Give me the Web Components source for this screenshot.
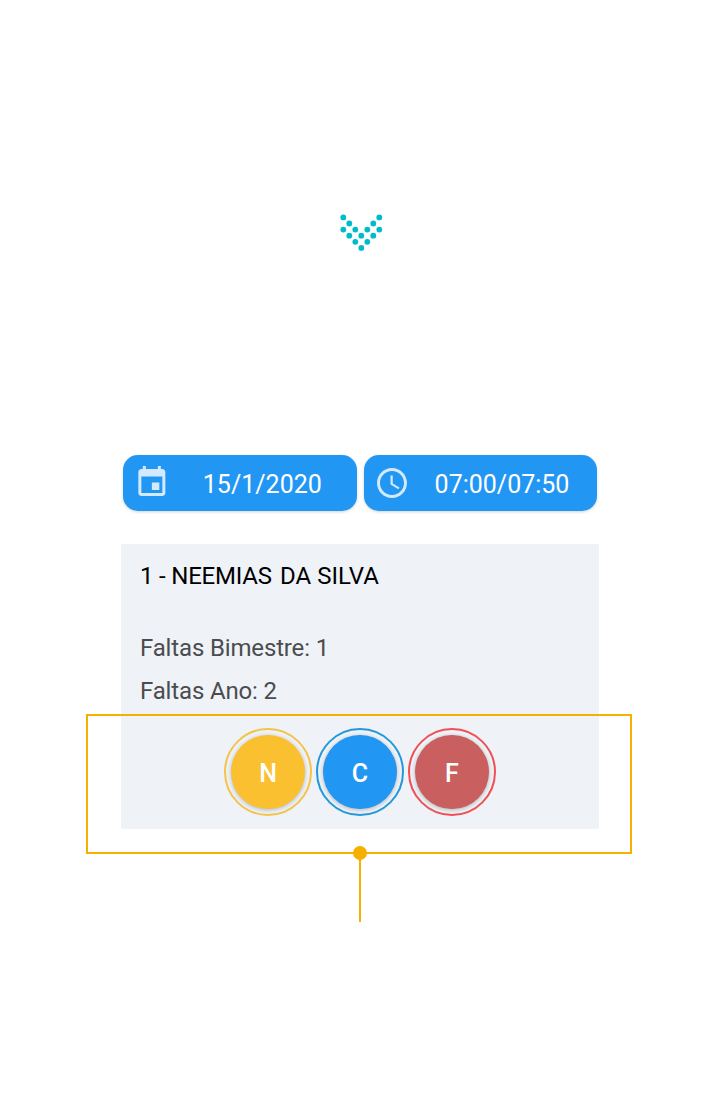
<!DOCTYPE html>
<html lang="pt-BR">
<head>
<meta charset="utf-8">
<title>Chamada</title>
<style>
html, body { margin: 0; background: #fff; }
body { font-family: Roboto, "Liberation Sans", sans-serif; }
</style>
</head>
<body>
<attendance-page></attendance-page>
<script>
const define = (name, html) => {
  const template = document.createElement('template');
  template.innerHTML = html;
  customElements.define(name, class extends HTMLElement {
    constructor() {
      super();
      this.attachShadow({ mode: 'open' }).append(template.content.cloneNode(true));
    }
  });
};

/* Chevron made of dots, on a 6px grid */
const dots = [[0,0],[6,0],[1,1],[5,1],[0,2],[2,2],[4,2],[6,2],[1,3],[3,3],[5,3],[2,4],[4,4],[3,5]]
  .map(([x, y]) => `<circle cx="${3.3 + x * 6}" cy="${3.4 + y * 6.1}" r="2.9"/>`).join('');
define('dotted-chevron', `
<style>:host { display: block; width: 43px; height: 38px; } svg { display: block; fill: #00bccb; }</style>
<svg width="43" height="38" viewBox="0 0 43 38">${dots}</svg>`);

define('event-icon', `
<style>:host { display: block; } svg { display: block; fill: #d3e9fd; }</style>
<svg width="36" height="36" viewBox="0 0 24 24"><path transform="translate(-.1 -.3)" d="M17 12h-5v5h5v-5zM16 1v2H8V1H6v2H5c-1.11 0-1.99.9-1.99 2L3 19c0 1.1.89 2 2 2h14c1.1 0 2-.9 2-2V5c0-1.1-.9-2-2-2h-1V1h-2zm3 18H5V8h14v11z"/></svg>`);

define('clock-icon', `
<style>:host { display: block; } svg { display: block; fill: #d3e9fd; }</style>
<svg width="36" height="36" viewBox="0 0 24 24"><path d="M11.99 2C6.47 2 2 6.48 2 12s4.47 10 9.99 10C17.52 22 22 17.52 22 12S17.52 2 11.99 2zM12 20c-4.42 0-8-3.58-8-8s3.58-8 8-8 8 3.58 8 8-3.58 8-8 8zm.5-13H11v6l5.25 3.15.75-1.23-4.5-2.67z"/></svg>`);

define('pill-button', `
<style>
:host { display: flex; box-sizing: border-box; width: 233.3px; height: 56px; border-radius: 15px; background: #2296f3;
  box-shadow: 0 1px 3px rgba(0,0,0,.18); color: #fff; font-size: 25px; line-height: 60px; padding-left: 10.5px; }
.icon { flex: none; width: 36px; padding-top: var(--icon-top, 9.5px); }
.label { margin-left: var(--label-gap, 33px); white-space: nowrap; }
</style>
<div class="icon"><slot name="icon"></slot></div><div class="label"><slot></slot></div>`);

define('round-action', `
<style>
:host { display: flex; box-sizing: border-box; width: 88px; height: 88px; border: 2px solid var(--ring); border-radius: 50%;
  padding: 5.3px 5px 5px; }
.disc { width: 74.5px; height: 74.5px; border-radius: 50%; background: var(--fill); color: #fff; font-size: 25px; font-weight: 500;
  line-height: 78px; text-align: center; box-shadow: 0 1px 4px rgba(0,0,0,.26); }
</style>
<div class="disc"><slot></slot></div>`);

define('student-card', `
<style>
:host { display: flex; flex-direction: column; box-sizing: border-box; width: 478px; height: 285px; background: #eff3f8;
  padding: 18px 0 0 19px; font-size: 24px; line-height: 28px; color: #4c4c4e; white-space: nowrap; }
.name { color: #000; letter-spacing: -.2px; }
.absences { display: grid; gap: 15.5px; margin-top: 44px; letter-spacing: -.15px; }
.actions { display: flex; gap: 4px; margin: 22.5px 0 0 84px; letter-spacing: 0; }
</style>
<div class="name"><slot name="name"></slot></div>
<div class="absences"><slot></slot></div>
<div class="actions"><slot name="action"></slot></div>`);

/* Callout frame that lies over the lower part of the card */
define('callout-frame', `
<style>
:host { display: block; position: absolute; left: 86px; top: 714px; width: 546px; height: 208px; }
.box { box-sizing: border-box; height: 140px; border: 2px solid #f6b000; }
.stem { width: 2px; height: 68px; margin-left: 273px; background: #f6b000; }
.knob { position: absolute; left: 267px; top: 132px; width: 14px; height: 14px; border-radius: 50%; background: #f6b000; }
</style>
<div class="box"></div><div class="stem"></div><div class="knob"></div>`);

define('attendance-page', `
<style>
:host { display: flex; flex-direction: column; position: relative; box-sizing: border-box; width: 720px; height: 1096px;
  padding-top: 214px; background: #fff; overflow: hidden; }
dotted-chevron { margin-left: 340px; }
.filters { display: flex; gap: 7px; margin: 203px 0 0 123.3px; }
.time { --icon-top: 10px; --label-gap: 24.5px; }
student-card { margin: 32.5px 0 0 121px; }
.surname { letter-spacing: 0; margin-left: 2.5px; }
.n { --ring: #f4c34c; --fill: #fbc02f; }
.c { --ring: #2498dd; --fill: #2296f3; }
.f { --ring: #ef5054; --fill: #ca5f5f; }
</style>
<dotted-chevron></dotted-chevron>
<div class="filters">
  <pill-button class="date"><event-icon slot="icon"></event-icon>15/1/2020</pill-button>
  <pill-button class="time"><clock-icon slot="icon"></clock-icon>07:00/07:50</pill-button>
</div>
<student-card>
  <span slot="name">1 - NEEMIAS <span class="surname">DA SILVA</span></span>
  <div>Faltas Bimestre: 1</div>
  <div>Faltas Ano: 2</div>
  <round-action slot="action" class="n">N</round-action>
  <round-action slot="action" class="c">C</round-action>
  <round-action slot="action" class="f">F</round-action>
</student-card>
<callout-frame></callout-frame>`);
</script>
</body>
</html>
